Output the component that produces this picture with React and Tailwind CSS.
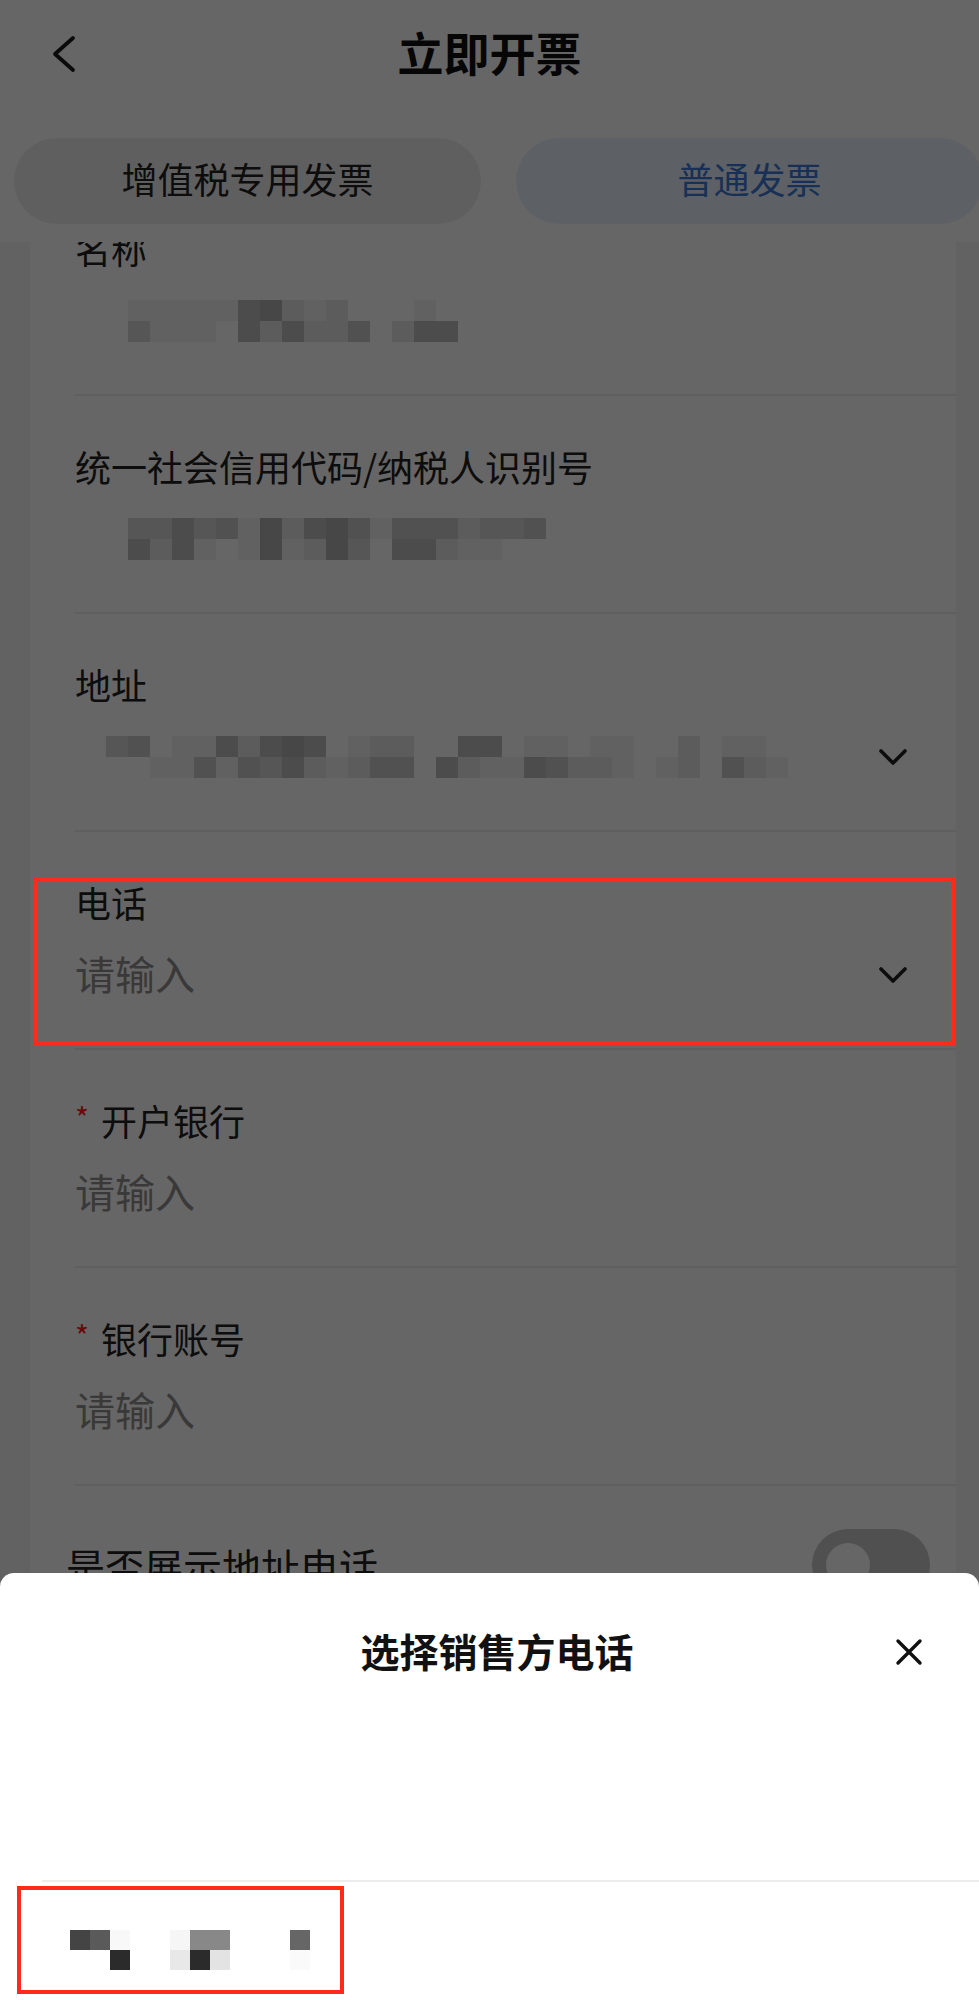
import React from 'react';

const SHADES = ['bg-white', 'bg-[#f2f2f2]', 'bg-[#e6e6e6]', 'bg-[#d8d8d8]', 'bg-[#cbcbcb]', 'bg-[#bdbdbd]', 'bg-[#b2b2b2]'];

// blurred values, one string per row of mosaic cells
const nameMosaic = ['00111115621200010', '00311105252240255'];
const taxMosaic = ['003353416256414442334', '005251016126305521100'];
const addrMosaic = ['034011525650122005501101100201100', '000114143521244052115422101204210'];

const phoneTop = ['bg-[#444444]', 'bg-[#5a5a5a]', 'bg-[#f8f8f8]', 'bg-white', 'bg-white', 'bg-[#f6f6f6]', 'bg-[#888888]', 'bg-[#888888]', 'bg-white', 'bg-white', 'bg-white', 'bg-[#666666]'];
const phoneBottom = ['bg-white', 'bg-white', 'bg-[#2b2b2b]', 'bg-white', 'bg-white', 'bg-[#e8e8e8]', 'bg-[#2b2b2b]', 'bg-[#e3e3e3]', 'bg-white', 'bg-white', 'bg-white', 'bg-[#fafafa]'];

const Mosaic = ({ rows }) => (
  <div className="flex flex-col ml-[9px]">
    {rows.map((row, i) => (
      <div key={i} className="flex">
        {row.split('').map((c, j) => (
          <div key={j} className={`w-[22px] h-[21px] ${SHADES[Number(c)]}`} />
        ))}
      </div>
    ))}
  </div>
);

const ChevronDown = () => (
  <svg width="28" height="16" viewBox="0 0 28 16" fill="none">
    <path d="M2 2L14 14L26 2" stroke="#222" strokeWidth="3.6" strokeLinecap="round" strokeLinejoin="round" />
  </svg>
);

const Field = ({ label, required, children, chevron }) => (
  <div className="ml-[45px] border-b-2 border-[#eeeeee] pt-[47px] pb-[45px] pr-[49px]">
    <div className="flex items-center text-[36px] leading-[50px] text-[#222] -translate-y-[2px]">
      {required && <span className="text-[#ff1a1a] text-[30px] mr-[12px] -mt-[6px]">*</span>}
      {label}
    </div>
    <div className="mt-[18px] h-[56px] flex items-center justify-between">
      {children}
      {chevron && <ChevronDown />}
    </div>
  </div>
);

const Placeholder = () => <span className="text-[40px] leading-[56px] text-[#8e8e8e] -translate-y-[2px]">请输入</span>;

export default function App() {
  return (
    <div className="relative w-[979px] h-[2000px] overflow-hidden bg-[#f5f5f5] font-['Noto_Sans_CJK_SC','Noto_Sans',sans-serif]">
      {/* Header */}
      <div className="relative z-10 bg-white h-[242px]">
        <div className="grid grid-cols-[1fr_auto_1fr] items-center h-[108px]">
          <div className="pl-[51px]">
            <svg width="26" height="38" viewBox="0 0 26 38" fill="none">
              <path d="M22 3L4 19L22 35" stroke="#1a1a1a" strokeWidth="3.8" strokeLinecap="round" strokeLinejoin="round" />
            </svg>
          </div>
          <h1 className="text-[46px] font-bold text-[#111] -mt-[6px]">立即开票</h1>
          <div />
        </div>
        <div className="flex gap-[35px] pl-[14px] pt-[30px]">
          <div className="w-[467px] shrink-0 h-[86px] rounded-full bg-[#eeeeee] flex items-center justify-center pb-[6px] text-[36px] text-[#222]">
            增值税专用发票
          </div>
          <div className="w-[467px] shrink-0 h-[86px] rounded-full bg-[#e8f2ff] flex items-center justify-center pb-[6px] text-[36px] text-[#3f78d6]">
            普通发票
          </div>
        </div>
      </div>

      {/* Form card */}
      <div className="ml-[30px] mr-[23px] -mt-[64px] bg-white pb-[300px]">
        <Field label="名称">
          <Mosaic rows={nameMosaic} />
        </Field>
        <Field label="统一社会信用代码/纳税人识别号">
          <Mosaic rows={taxMosaic} />
        </Field>
        <Field label="地址" chevron>
          <Mosaic rows={addrMosaic} />
        </Field>
        <Field label="电话" chevron>
          <Placeholder />
        </Field>
        <Field label="开户银行" required>
          <Placeholder />
        </Field>
        <Field label="银行账号" required>
          <Placeholder />
        </Field>
        <div className="flex items-center justify-between pl-[36px] pr-[26px] pt-[43px]">
          <span className="text-[39px] text-[#222]">是否展示地址电话</span>
          <div className="w-[118px] h-[72px] rounded-full bg-[#c8c8c8] flex items-center pl-[14px]">
            <div className="w-[44px] h-[44px] rounded-full bg-white" />
          </div>
        </div>
      </div>

      {/* Mask */}
      <div className="absolute inset-0 z-20 bg-black/60" />

      {/* Bottom sheet */}
      <div className="absolute left-0 right-0 top-[1573px] bottom-0 z-30 bg-white rounded-t-[14px]">
        <div className="grid grid-cols-[1fr_auto_1fr] items-center h-[158px] pl-[15px]">
          <div />
          <h2 className="text-[39px] font-bold text-[#111] -mt-[4px]">选择销售方电话</h2>
          <div className="flex justify-end pr-[56px]">
            <svg width="28" height="28" viewBox="0 0 28 28" fill="none">
              <path d="M3 3L25 25M25 3L3 25" stroke="#111" strokeWidth="3.4" strokeLinecap="round" />
            </svg>
          </div>
        </div>
        <div className="h-[149px]" />
        <div className="ml-[42px] border-t-2 border-[#ececec]" />
        <div className="pt-[48px] pl-[70px] flex flex-col">
          <div className="flex">
            {phoneTop.map((c, i) => <div key={i} className={`w-[20px] h-[20px] ${c}`} />)}
          </div>
          <div className="flex">
            {phoneBottom.map((c, i) => <div key={i} className={`w-[20px] h-[20px] ${c}`} />)}
          </div>
        </div>
      </div>

      {/* Annotation boxes */}
      <div className="absolute z-40 top-[877px] left-[34px] w-[921px] h-[168px] border-4 border-[#ff2a1a]" />
      <div className="absolute z-40 top-[1886px] left-[17px] w-[327px] h-[108px] border-4 border-[#ff2a1a]" />
    </div>
  );
}
